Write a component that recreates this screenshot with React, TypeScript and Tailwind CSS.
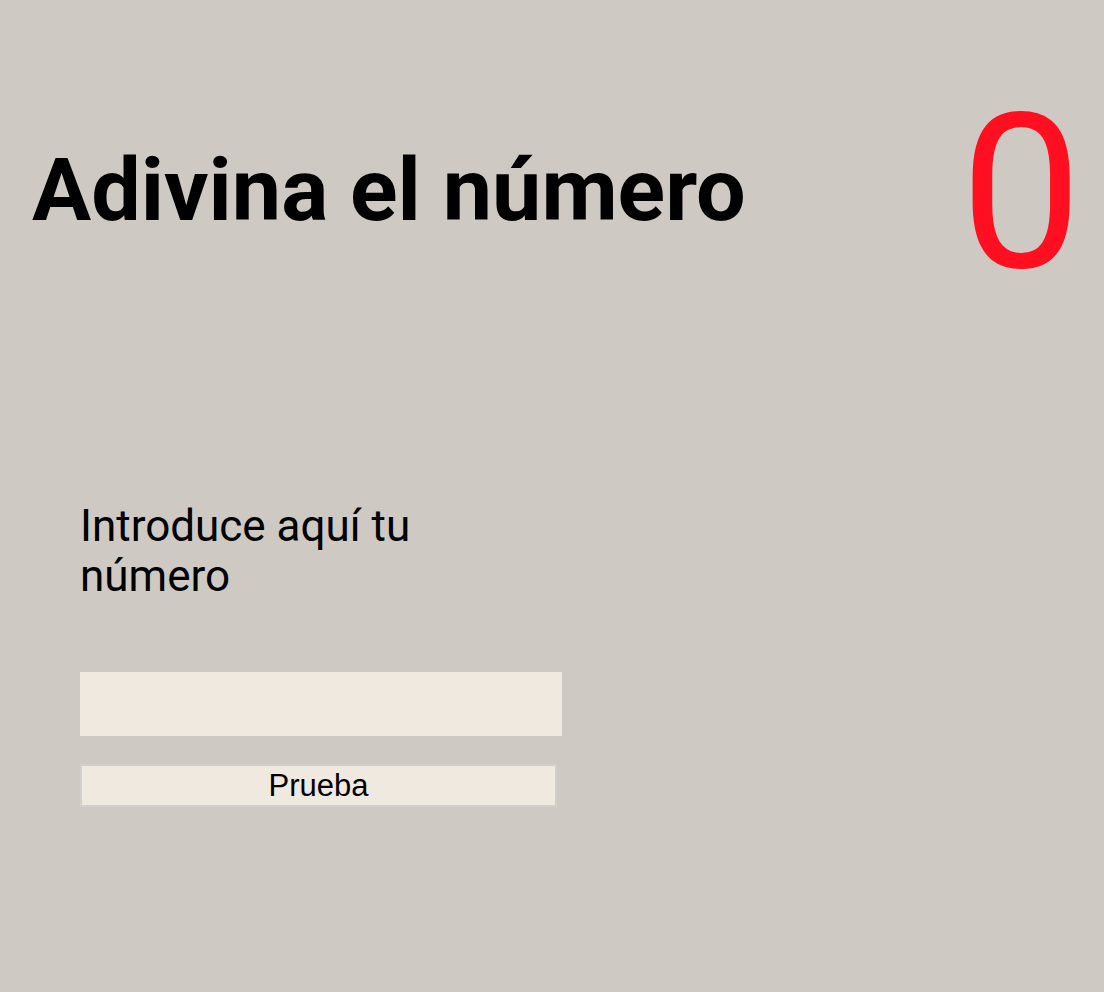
export default function App() {
  return (
    <main className="min-h-[992px] w-full bg-[#cec9c3] font-['Roboto',sans-serif] text-black">
      <header className="flex items-start justify-between pl-[32px] pr-[22px] pt-[88px]">
        <h1 className="mt-[58px] text-[88px] font-bold leading-none">Adivina el número</h1>
        <div className="-mt-[2px] text-[216px] font-normal leading-none text-[#ff0f1f]">0</div>
      </header>

      <section className="mt-[199px] px-[80px]">
        <p className="w-[380px] text-[44px] leading-[50px]">Introduce aquí tu número</p>
        <div className="mt-[71px] flex w-[482px] flex-col gap-[28px]">
          <input type="text" className="h-[64px] w-[482px] bg-[#f0e9e0] outline-none" />
          <button className="h-[43px] w-[477px] border-2 border-[#d2d0cc] bg-[#f0e9e0] font-['Liberation_Sans',sans-serif] text-[31px] leading-none">
            Prueba
          </button>
        </div>
      </section>
    </main>
  );
}
